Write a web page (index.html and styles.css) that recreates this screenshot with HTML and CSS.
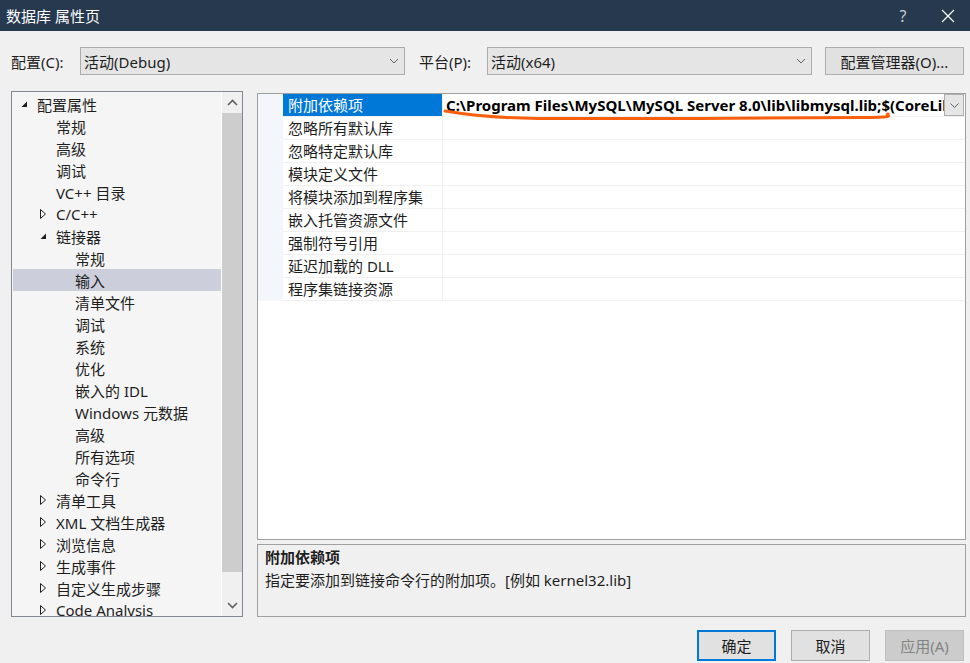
FILE: index.html
```html
<!DOCTYPE html>
<html lang="zh-CN">
<head>
  <meta charset="UTF-8" />
  <title>数据库 属性页</title>
  <link rel="stylesheet" href="styles.css">
</head>
<body>
<div class="titlebar">
  <span class="title">数据库 属性页</span>
  <span class="help">?</span>
  <span class="close">
    <svg width="14" height="14" viewBox="0 0 14 14"><path d="M1 1 L13 13 M13 1 L1 13" stroke="#fff" stroke-width="1.2" fill="none"/></svg>
  </span>
</div>

<div class="config-row">
  <span class="label">配置(C):</span>
  <div class="combo">
    <span>活动(Debug)</span>
    <svg class="chev" width="10" height="6" viewBox="0 0 10 6"><path d="M1 1 L5 5 L9 1" stroke="#606060" fill="none"/></svg>
  </div>
  <span class="label label-platform">平台(P):</span>
  <div class="combo">
    <span>活动(x64)</span>
    <svg class="chev" width="10" height="6" viewBox="0 0 10 6"><path d="M1 1 L5 5 L9 1" stroke="#606060" fill="none"/></svg>
  </div>
  <button class="btn btn-manage">配置管理器(O)...</button>
</div>

<div class="main">
  <div class="tree">
    <ul class="tree-list">
      <li class="node lvl0"><span class="tog"><svg width="7" height="7" viewBox="0 0 7 7"><path d="M6 0.5 L6 6 L0.5 6 Z" fill="#1e1e1e"/></svg></span>配置属性</li>
      <li class="node lvl1"><span class="tog"></span>常规</li>
      <li class="node lvl1"><span class="tog"></span>高级</li>
      <li class="node lvl1"><span class="tog"></span>调试</li>
      <li class="node lvl1"><span class="tog"></span>VC++ 目录</li>
      <li class="node lvl1"><span class="tog"><svg width="7" height="10" viewBox="0 0 7 10"><path d="M0.5 0.5 L5.5 5 L0.5 9.5 Z" stroke="#1e1e1e" fill="none"/></svg></span>C/C++</li>
      <li class="node lvl1"><span class="tog"><svg width="7" height="7" viewBox="0 0 7 7"><path d="M6 0.5 L6 6 L0.5 6 Z" fill="#1e1e1e"/></svg></span>链接器</li>
      <li class="node lvl2"><span class="tog"></span>常规</li>
      <li class="node lvl2 selected"><span class="tog"></span>输入</li>
      <li class="node lvl2"><span class="tog"></span>清单文件</li>
      <li class="node lvl2"><span class="tog"></span>调试</li>
      <li class="node lvl2"><span class="tog"></span>系统</li>
      <li class="node lvl2"><span class="tog"></span>优化</li>
      <li class="node lvl2"><span class="tog"></span>嵌入的 IDL</li>
      <li class="node lvl2"><span class="tog"></span>Windows 元数据</li>
      <li class="node lvl2"><span class="tog"></span>高级</li>
      <li class="node lvl2"><span class="tog"></span>所有选项</li>
      <li class="node lvl2"><span class="tog"></span>命令行</li>
      <li class="node lvl1"><span class="tog"><svg width="7" height="10" viewBox="0 0 7 10"><path d="M0.5 0.5 L5.5 5 L0.5 9.5 Z" stroke="#1e1e1e" fill="none"/></svg></span>清单工具</li>
      <li class="node lvl1"><span class="tog"><svg width="7" height="10" viewBox="0 0 7 10"><path d="M0.5 0.5 L5.5 5 L0.5 9.5 Z" stroke="#1e1e1e" fill="none"/></svg></span>XML 文档生成器</li>
      <li class="node lvl1"><span class="tog"><svg width="7" height="10" viewBox="0 0 7 10"><path d="M0.5 0.5 L5.5 5 L0.5 9.5 Z" stroke="#1e1e1e" fill="none"/></svg></span>浏览信息</li>
      <li class="node lvl1"><span class="tog"><svg width="7" height="10" viewBox="0 0 7 10"><path d="M0.5 0.5 L5.5 5 L0.5 9.5 Z" stroke="#1e1e1e" fill="none"/></svg></span>生成事件</li>
      <li class="node lvl1"><span class="tog"><svg width="7" height="10" viewBox="0 0 7 10"><path d="M0.5 0.5 L5.5 5 L0.5 9.5 Z" stroke="#1e1e1e" fill="none"/></svg></span>自定义生成步骤</li>
      <li class="node lvl1"><span class="tog"><svg width="7" height="10" viewBox="0 0 7 10"><path d="M0.5 0.5 L5.5 5 L0.5 9.5 Z" stroke="#1e1e1e" fill="none"/></svg></span>Code Analysis</li>
    </ul>
    <div class="vscroll">
      <div class="arrow">
        <svg width="11" height="7" viewBox="0 0 11 7"><path d="M1 6 L5.5 1.5 L10 6" stroke="#606060" stroke-width="1.6" fill="none"/></svg>
      </div>
      <div class="track"><div class="thumb"></div></div>
      <div class="arrow">
        <svg width="11" height="7" viewBox="0 0 11 7"><path d="M1 1 L5.5 5.5 L10 1" stroke="#606060" stroke-width="1.6" fill="none"/></svg>
      </div>
    </div>
  </div>

  <div class="right">
    <div class="grid">
      <div class="prop selected">
        <div class="gutter"></div>
        <div class="name">附加依赖项</div>
        <div class="value">
          <span class="value-text">C:\Program Files\MySQL\MySQL Server 8.0\lib\libmysql.lib;$(CoreLibraryDependencies);%(AdditionalDependencies)</span>
          <span class="drop">
            <svg width="9" height="5" viewBox="0 0 9 5"><path d="M0.5 0.5 L4.5 4.5 L8.5 0.5" stroke="#606060" fill="none"/></svg>
          </span>
        </div>
      </div>
      <div class="prop"><div class="gutter"></div><div class="name">忽略所有默认库</div><div class="value"></div></div>
      <div class="prop"><div class="gutter"></div><div class="name">忽略特定默认库</div><div class="value"></div></div>
      <div class="prop"><div class="gutter"></div><div class="name">模块定义文件</div><div class="value"></div></div>
      <div class="prop"><div class="gutter"></div><div class="name">将模块添加到程序集</div><div class="value"></div></div>
      <div class="prop"><div class="gutter"></div><div class="name">嵌入托管资源文件</div><div class="value"></div></div>
      <div class="prop"><div class="gutter"></div><div class="name">强制符号引用</div><div class="value"></div></div>
      <div class="prop"><div class="gutter"></div><div class="name">延迟加载的 DLL</div><div class="value"></div></div>
      <div class="prop"><div class="gutter"></div><div class="name">程序集链接资源</div><div class="value"></div></div>

      <!-- hand-drawn orange underline over the value -->
      <svg class="mark" width="450" height="14" viewBox="0 0 450 14">
        <path d="M2 2 C 20 5, 50 9, 95 9.5 S 380 9, 420 8.5 S 440 6.5, 445 5" stroke="#f8600e" stroke-width="3" stroke-linecap="round" fill="none"/>
      </svg>
    </div>

    <div class="desc">
      <div class="desc-title">附加依赖项</div>
      <div class="desc-text">指定要添加到链接命令行的附加项。[例如 kernel32.lib]</div>
    </div>
  </div>
</div>

<div class="footer">
  <button class="btn btn-default">确定</button>
  <button class="btn">取消</button>
  <button class="btn" disabled>应用(A)</button>
</div>
</body>
</html>
```

FILE: styles.css
```css
* {
  box-sizing: border-box;
}
body {
  margin: 0;
  width: 970px;
  height: 663px;
  overflow: hidden;
  background: #f0f0f0;
  font-family: "Segoe UI", "Noto Sans", "Noto Sans CJK SC", sans-serif;
  font-size: 15px;
  color: #1e1e1e;
}

/* title bar */
.titlebar {
  height: 31px;
  background: #26394f;
  color: #fff;
  display: flex;
  align-items: center;
  padding-left: 6px;
}
.titlebar .title {
  flex: 1;
}
.titlebar .help {
  width: 46px;
  text-align: center;
  color: #c8ced6;
  font-size: 16px;
}
.titlebar .close {
  width: 44px;
  display: flex;
  justify-content: center;
}

/* configuration row */
.config-row {
  display: flex;
  align-items: center;
  margin-top: 16px;
  padding-left: 11px;
  height: 28px;
}
.label {
  width: 69px;
}
.label-platform {
  margin-left: 14px;
  width: 68px;
}
.combo {
  width: 325px;
  height: 28px;
  background: #e5e5e5;
  border: 1px solid #adadad;
  display: flex;
  align-items: center;
  justify-content: space-between;
  padding: 0 5px 0 3px;
}
.btn {
  font: inherit;
  color: #1e1e1e;
  background: #e1e1e1;
  border: 1px solid #adadad;
  padding: 0;
}
.btn-manage {
  margin-left: 13px;
  width: 139px;
  height: 28px;
}

/* main area */
.main {
  display: flex;
  margin-top: 16px;
  height: 526px;
}
.tree {
  margin-left: 11px;
  width: 232px;
  height: 526px;
  border: 1px solid #828790;
  background: #f5f5f5;
  display: flex;
}
.tree-list {
  flex: 1;
  list-style: none;
  margin: 0;
  padding: 1px 0 0 1px;
  overflow: hidden;
}
.node {
  display: flex;
  align-items: center;
  height: 22px;
  white-space: nowrap;
}
.node.selected {
  background: #cccedb;
}
.lvl0 { padding-left: 6px; }
.lvl1 { padding-left: 25px; }
.lvl2 { padding-left: 44px; }
.tog {
  width: 18px;
  flex: none;
  display: flex;
  align-items: center;
  padding-left: 2px;
}

.vscroll {
  width: 21px;
  border-left: 1px solid #fff;
  background: #f0f0f0;
  display: flex;
  flex-direction: column;
}
.vscroll .arrow {
  height: 21px;
  display: flex;
  align-items: center;
  justify-content: center;
}
.vscroll .track {
  flex: 1;
}
.vscroll .thumb {
  height: 459px;
  background: #cdcdcd;
}

/* property grid */
.right {
  margin-left: 14px;
  margin-top: 2px;
  width: 709px;
  display: flex;
  flex-direction: column;
}
.grid {
  position: relative;
  height: 447px;
  border: 1px solid #a0a0a0;
  background: #fff;
}
.prop {
  display: flex;
  height: 23px;
}
.gutter {
  width: 25px;
  background: #f3f6fb;
}
.name {
  width: 160px;
  padding-left: 5px;
  line-height: 22px;
  border-bottom: 1px solid #f0f0f0;
  border-right: 1px solid #f0f0f0;
  white-space: nowrap;
}
.prop.selected .name {
  background: #0078d7;
  color: #fff;
}
.value {
  flex: 1;
  display: flex;
  align-items: center;
  min-width: 0;
  padding-left: 3px;
  border-bottom: 1px solid #f0f0f0;
}
.value-text {
  flex: 1;
  overflow: hidden;
  white-space: nowrap;
  font-weight: bold;
  color: #000;
}
.drop {
  width: 20px;
  height: 22px;
  margin-right: 1px;
  background: #e5e5e5;
  border: 1px solid #adadad;
  display: flex;
  align-items: center;
  justify-content: center;
}
.mark {
  position: absolute;
  left: 185px;
  top: 15px;
}

/* description */
.desc {
  margin-top: 4px;
  height: 73px;
  border: 1px solid #a0a0a0;
  background: #f0f0f0;
  padding: 1px 7px;
  line-height: 23px;
}
.desc-title {
  font-weight: bold;
}

/* dialog buttons */
.footer {
  display: flex;
  justify-content: flex-end;
  gap: 15px;
  margin-top: 13px;
  padding-right: 6px;
}
.footer .btn {
  width: 79px;
  height: 31px;
}
.btn-default {
  border: 2px solid #0078d7;
}
.btn:disabled {
  background: #cccccc;
  border-color: #bfbfbf;
  color: #838383;
}
```
